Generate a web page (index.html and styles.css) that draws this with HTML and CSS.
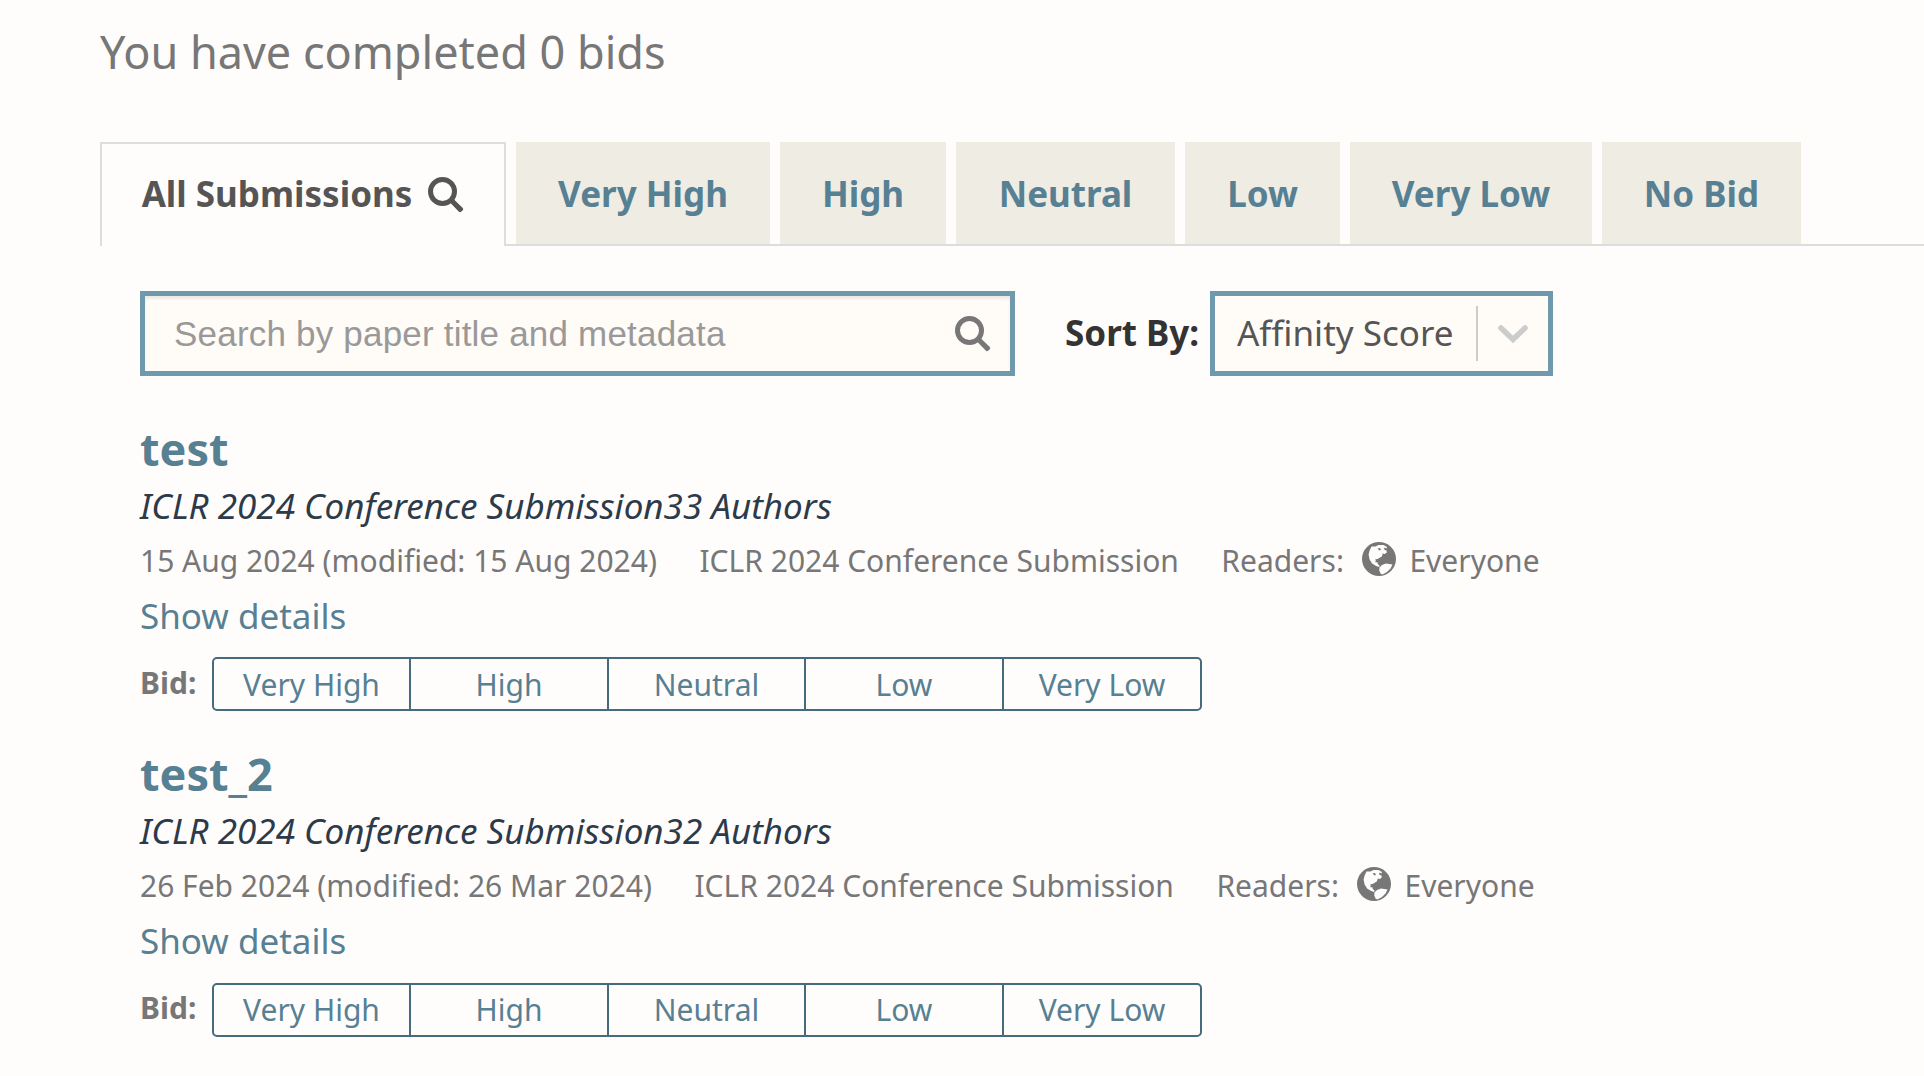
FILE: index.html
```html
<!DOCTYPE html>
<html lang="en">
<head>
<meta charset="utf-8">
<title>Bidding Console</title>
<link rel="stylesheet" href="styles.css">
</head>
<body>
<svg class="defs" aria-hidden="true">
  <symbol id="search" viewBox="0 0 36 36">
    <circle cx="14.500" cy="14.500" r="12" fill="none" stroke="currentColor" stroke-width="5"/>
    <path d="M22 25.500l3.500-3.500 9 8.700c.9.9.9 1.700.2 2.500l-1.400 1.400c-.8.8-1.700.8-2.600-.1z" fill="currentColor"/>
  </symbol>
  <symbol id="globe" viewBox="0 0 34 34">
    <circle cx="17" cy="17" r="17" fill="currentColor"/>
    <path class="land" d="M9.500 4.500l4 0 3-1.500 5 0 3.500 2-.5 1.500-2-1-.5 2 2.500 1 .3 2-2 1.500-2-.5-1 3-2.500 1.500-2.500 1.500-1.500 1.500.5 1.500 1.500-.5.5 2 1.800 1.500-.5 1.500-3-1-4-2.500-2.500-4-1-5 1-4z"/>
    <path class="land" d="M17.500 25.500l2.500-2.500 4-1.500 6.500 1-2 4-3.500 3.500-4.500 2.500-2-1-1.200-3z"/>
    <path d="M15.500 6.500l2.500-.5 1 1.800-1.500.8zM13 17.500l2.500-.5.8 1.500-1.800.5z" fill="currentColor"/>
  </symbol>
</svg>
<h3 class="bid-count">You have completed 0 bids</h3>
<nav class="tabs">
  <a class="tab active">All Submissions <svg class="icon"><use href="#search"/></svg></a>
  <a class="tab very-high">Very High</a>
  <a class="tab high">High</a>
  <a class="tab neutral">Neutral</a>
  <a class="tab low">Low</a>
  <a class="tab very-low">Very Low</a>
  <a class="tab no-bid">No Bid</a>
</nav>
<main class="content">
  <form class="filters">
    <div class="search-box"><span class="placeholder">Search by paper title and metadata</span><svg class="icon"><use href="#search"/></svg></div>
    <label class="sort-label">Sort By:</label>
    <div class="select"><span class="value">Affinity Score</span><span class="separator"></span>
      <svg class="chevron" viewBox="0 0 30 18"><path d="M3 3l12 11.500L27 3" fill="none" stroke="currentColor" stroke-width="5.500" stroke-linecap="round"/></svg>
    </div>
  </form>
  <article class="note">
    <h4 class="title">test</h4>
    <div class="authors">ICLR 2024 Conference Submission33 Authors</div>
    <div class="meta"><span>15 Aug 2024 (modified: 15 Aug 2024)</span><span>ICLR 2024 Conference Submission</span><span class="readers">Readers: <svg class="globe"><use href="#globe"/></svg> Everyone</span></div>
    <a class="details">Show details</a>
    <div class="bid-row"><span class="bid-label">Bid:</span>
      <div class="bid-group"><span>Very High</span><span>High</span><span>Neutral</span><span>Low</span><span>Very Low</span></div>
    </div>
  </article>
  <article class="note">
    <h4 class="title">test_2</h4>
    <div class="authors">ICLR 2024 Conference Submission32 Authors</div>
    <div class="meta"><span>26 Feb 2024 (modified: 26 Mar 2024)</span><span>ICLR 2024 Conference Submission</span><span class="readers">Readers: <svg class="globe"><use href="#globe"/></svg> Everyone</span></div>
    <a class="details">Show details</a>
    <div class="bid-row"><span class="bid-label">Bid:</span>
      <div class="bid-group"><span>Very High</span><span>High</span><span>Neutral</span><span>Low</span><span>Very Low</span></div>
    </div>
  </article>
</main>
</body>
</html>
```
FILE: styles.css
```css
* { box-sizing: border-box; }
body { margin: 0; height: 1076px; overflow: hidden; background: #fffdfc; font-family: "Noto Sans", sans-serif; font-size: 35px; color: #333; white-space: nowrap; }
.defs { display: none; }
.icon { width: 36px; height: 36px; flex: none; }
.bid-count { margin: 0; height: 142px; padding-left: 100px; font-size: 45px; font-weight: 400; line-height: 104px; color: #777; }
.tabs { display: flex; gap: 10px; height: 104px; padding-left: 100px; background: linear-gradient(#ddd, #ddd) 506px 100% / 100% 2px no-repeat; }
.tab { display: flex; align-items: center; justify-content: center; height: 102px; background: #efece4; color: #578093; font-weight: 700; }
.tab.active { width: 406px; height: 104px; gap: 16px; padding-bottom: 4px; background: #fffdfc; border: 2px solid #ddd; border-bottom: 0; color: #555; }
.tab .icon { margin-top: 4px; }
.very-high { width: 254px; }
.high { width: 166px; }
.neutral { width: 219px; }
.low { width: 155px; }
.very-low { width: 242px; }
.no-bid { width: 199px; }
.content { padding: 45px 0 0 140px; }
.filters { display: flex; align-items: center; height: 85px; margin-bottom: 42px; }
.search-box { display: flex; align-items: center; justify-content: space-between; width: 875px; height: 85px; padding: 0 19px 0 29px; border: 5px solid #6f9aad; background: #fffbf7; box-shadow: inset 0 3px 3px rgba(0, 0, 0, .075); color: #777; }
.placeholder { font-family: "Liberation Sans", Arial, sans-serif; letter-spacing: .2px; color: #999; }
.sort-label { width: 145px; margin-left: 50px; padding-bottom: 2px; font-weight: 700; }
.select { display: flex; align-items: center; width: 343px; height: 85px; border: 5px solid #6f9aad; background: #fffbf7; color: #555; }
.value { width: 261px; padding: 0 0 2px 22px; }
.separator { width: 2px; height: 55px; background: #ccc; }
.chevron { width: 30px; height: 18px; margin-left: 20px; color: #ccc; }
.note { margin-bottom: 32px; }
.title { margin: 0; font-size: 45px; line-height: 62px; font-weight: 700; color: #578093; }
.authors { line-height: 52px; font-style: italic; color: #2c3a4a; }
.meta { display: flex; gap: 42.5px; font-size: 30px; line-height: 57px; color: #777; }
.readers { display: flex; }
.globe { width: 34px; height: 34px; margin: 10px 13px 0 18.5px; }
.land { fill: #fffdfc; }
.details { display: block; line-height: 54px; color: #578093; }
.bid-row { display: flex; margin-top: 14px; height: 54px; font-size: 30px; line-height: 51px; }
.note + .note .bid-row { margin-top: 15px; line-height: 49px; }
.bid-label { width: 72px; font-weight: 700; color: #777; }
.bid-group { display: grid; grid-template-columns: 195px 198px 197px 198px 198px; width: 990px; height: 54px; border: 2px solid #456b7c; border-radius: 5px; color: #578093; text-align: center; }
.bid-group span + span { border-left: 2px solid #456b7c; }
```
